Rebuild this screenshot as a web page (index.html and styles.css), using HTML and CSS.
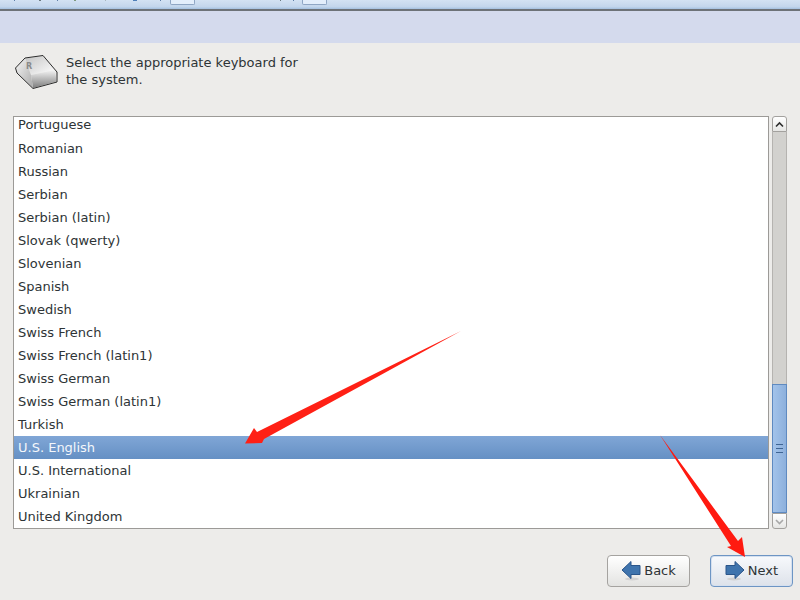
FILE: index.html
```html
<!DOCTYPE html>
<html lang="en">
<head>
    <meta charset="UTF-8">
    <meta name="viewport" content="width=device-width, initial-scale=1.0">
    <title>Keyboard selection</title>
    <link rel="stylesheet" href="styles.css">
</head>
<body>
    <div class="toolbar">
        <span class="tick tick-a"></span>
        <span class="tick tick-b"></span>
        <span class="tick tick-c"></span>
        <span class="tick tick-d"></span>
        <span class="tick tick-e"></span>
        <span class="tick tick-f"></span>
        <span class="tick tick-g"></span>
        <span class="tool-tab tab-first"></span>
        <span class="tick tick-h"></span>
        <span class="tick tick-i"></span>
        <span class="tool-tab tab-second"></span>
    </div>
    <div class="banner"></div>

    <div class="intro">
        <svg class="key-icon" width="46" height="36" viewBox="0 0 46 36">
            <defs>
                <linearGradient id="keyTop" x1="0" y1="0" x2="1" y2="1">
                    <stop offset="0" stop-color="#c4c4c4"/>
                    <stop offset="1" stop-color="#ffffff"/>
                </linearGradient>
                <linearGradient id="keyFront" x1="0" y1="0" x2="0" y2="1">
                    <stop offset="0" stop-color="#f4f4f4"/>
                    <stop offset="1" stop-color="#7d7d7d"/>
                </linearGradient>
                <linearGradient id="keySide" x1="0" y1="0" x2="1" y2="1">
                    <stop offset="0" stop-color="#f6f6f6"/>
                    <stop offset="1" stop-color="#a8a8a8"/>
                </linearGradient>
            </defs>
            <path d="M10 3.5 L28 1 L40 15 L16 20 Z" fill="url(#keyTop)"/>
            <path d="M16 20 L40 15 L41.5 26.5 L18 33 Z" fill="url(#keyFront)"/>
            <path d="M1 13 L10 3.5 L16 20 L18 33 L2 18 Z" fill="url(#keySide)"/>
            <path d="M0.5 13 L10 3 L28 0.5 L42 17 L42 27 L18 33.5 L2 18 Z" fill="none" stroke="#2b2b2b" stroke-width="1" stroke-linejoin="round"/>
            <text class="key-letter" x="11" y="14">R</text>
        </svg>
        <p class="intro-text">Select the appropriate keyboard for<br>the system.</p>
    </div>

    <div class="list-row">
        <ul class="layout-list">
            <li class="clipped">Portuguese</li>
            <li>Romanian</li>
            <li>Russian</li>
            <li>Serbian</li>
            <li>Serbian (latin)</li>
            <li>Slovak (qwerty)</li>
            <li>Slovenian</li>
            <li>Spanish</li>
            <li>Swedish</li>
            <li>Swiss French</li>
            <li>Swiss French (latin1)</li>
            <li>Swiss German</li>
            <li>Swiss German (latin1)</li>
            <li>Turkish</li>
            <li class="selected">U.S. English</li>
            <li>U.S. International</li>
            <li>Ukrainian</li>
            <li>United Kingdom</li>
        </ul>
        <div class="scrollbar">
            <div class="scroll-btn scroll-up">
                <svg width="13" height="13" viewBox="0 0 13 13"><path d="M3 8.5 L6.5 5 L10 8.5" fill="none" stroke="#2e2e2e" stroke-width="1.6"/></svg>
            </div>
            <div class="scroll-track">
                <div class="scroll-thumb"><span class="grip"></span></div>
            </div>
            <div class="scroll-btn scroll-down">
                <svg width="13" height="13" viewBox="0 0 13 13"><path d="M3 5 L6.5 8.5 L10 5" fill="none" stroke="#a8a8a8" stroke-width="1.6"/></svg>
            </div>
        </div>
    </div>

    <div class="buttons">
        <button class="btn">
            <svg width="20" height="20" viewBox="0 0 20 20"><ellipse cx="11" cy="18" rx="7" ry="1.5" fill="#d2d2d2"/><path d="M1 9 L10 0.5 L10 4.5 L19 4.5 L19 13.5 L10 13.5 L10 17.5 Z" fill="#3f74ad" stroke="#2a558a" stroke-width="1"/></svg>
            <span class="btn-label">Back</span>
        </button>
        <button class="btn btn-default">
            <svg width="20" height="20" viewBox="0 0 20 20"><ellipse cx="9" cy="18" rx="7" ry="1.5" fill="#d2d2d2"/><path d="M19 9 L10 0.5 L10 4.5 L1 4.5 L1 13.5 L10 13.5 L10 17.5 Z" fill="#3f74ad" stroke="#2a558a" stroke-width="1"/></svg>
            <span class="btn-label">Next</span>
        </button>
    </div>

    <!-- red arrows drawn over the screenshot -->
    <svg class="annotations" width="800" height="600" viewBox="0 0 800 600">
        <path d="M461 331 L257 432 L254 428 L245 443.5 L262 443 L264 439 Z" fill="#ff2015"/>
        <path d="M660 435 L738 541 L742 537 L745 557 L727 547 L731 546 Z" fill="#ff1a10"/>
    </svg>
</body>
</html>
```

FILE: styles.css
```css
html, body {
    height: 100%;
}
body {
    font-family: 'DejaVu Sans', sans-serif;
    font-size: 13px;
    margin: 0;
    background-color: #edecea;
    color: #2e3436;
    overflow: hidden;
    display: flex;
    flex-direction: column;
}
.toolbar {
    height: 9px;
    flex: none;
    display: flex;
    align-items: flex-start;
    background: linear-gradient(#d3e2f3, #c3d6ec 75%, #a3c0e0);
    border-bottom: 2px solid #6d7278;
}
.tick {
    width: 1px;
    height: 1px;
    background-color: #5f7fa8;
}
.tick-a { margin-left: 14px; }
.tick-b { margin-left: 24px; width: 2px; background-color: #6b7a80; }
.tick-c { margin-left: 16px; }
.tick-d { margin-left: 16px; width: 2px; background-color: #7d9a80; }
.tick-e { margin-left: 29px; background-color: #a8b8c0; }
.tick-f { margin-left: 27px; width: 4px; background-color: #4f7fb8; }
.tick-g { margin-left: 23px; }
.tick-h { margin-left: 85px; background-color: #6b7a80; }
.tick-i { margin-left: 12px; }
.tool-tab {
    width: 23px;
    height: 4px;
    background-color: #e3eefb;
    border: 1px solid #8fa6c4;
    border-top: none;
    border-radius: 0 0 2px 2px;
}
.tab-first {
    margin-left: 9px;
}
.tab-second {
    margin-left: 8px;
}
.banner {
    height: 32px;
    flex: none;
    background-color: #d4daed;
}
.intro {
    display: flex;
    gap: 5px;
    padding: 11px 0 0 15px;
    height: 73px;
    flex: none;
    box-sizing: border-box;
}
.key-icon {
    flex: none;
    margin-top: 1px;
}
.key-letter {
    font-family: 'DejaVu Sans', sans-serif;
    font-size: 8px;
    font-weight: bold;
    fill: #8a8a8a;
}
.intro-text {
    margin: 0;
    line-height: 17px;
}
.list-row {
    display: flex;
    gap: 3px;
    padding: 0 13px;
    height: 413px;
    flex: none;
}
.layout-list {
    flex: 1;
    list-style: none;
    margin: 0;
    padding: 0;
    background-color: #fff;
    border: 1px solid #9c9a97;
    overflow: hidden;
}
.layout-list li {
    height: 23px;
    line-height: 23px;
    padding-left: 4px;
}
.layout-list li.clipped {
    height: 20px;
    line-height: 16px;
}
.layout-list li.selected {
    color: #f4f7fb;
    background: linear-gradient(#80a6d6, #6590c4);
}
.scrollbar {
    width: 15px;
    display: flex;
    flex-direction: column;
}
.scroll-btn {
    height: 14px;
    flex: none;
    display: flex;
    align-items: center;
    justify-content: center;
    background: linear-gradient(#ffffff, #e6e6e4);
    border: 1px solid #a3a19e;
}
.scroll-up {
    border-radius: 3px 3px 0 0;
}
.scroll-down {
    border-radius: 0 0 3px 3px;
}
.scroll-track {
    flex: 1;
    display: flex;
    flex-direction: column;
    justify-content: flex-end;
    background-color: #d2d1ce;
    border-left: 1px solid #b5b3b0;
    border-right: 1px solid #b5b3b0;
}
.scroll-thumb {
    height: 129px;
    margin: 0 -1px;
    display: flex;
    align-items: center;
    justify-content: center;
    background: linear-gradient(90deg, #a3c3ea, #8db0dc);
    border: 1px solid #5f8ac0;
    box-sizing: border-box;
}
.grip {
    width: 7px;
    height: 7px;
    border-top: 1px solid #3f6594;
    border-bottom: 1px solid #3f6594;
    background: linear-gradient(#3f6594, #3f6594) center / 100% 1px no-repeat;
}
.buttons {
    display: flex;
    justify-content: flex-end;
    gap: 20px;
    padding: 26px 7px 0 0;
}
.btn {
    width: 83px;
    height: 32px;
    display: flex;
    align-items: center;
    justify-content: center;
    gap: 3px;
    padding: 0;
    font-family: 'DejaVu Sans', sans-serif;
    font-size: 13px;
    color: #2e3436;
    background: linear-gradient(#ffffff, #e3e3e1);
    border: 1px solid #a5a3a0;
    border-radius: 4px;
}
.btn-label {
    padding-bottom: 2px;
}
.btn-default {
    background: linear-gradient(#f7f9fc, #dde2ea);
    border-color: #6d95c4;
    box-shadow: inset 0 0 0 1px #d5e0ef;
}
.annotations {
    position: absolute;
    top: 0;
    left: 0;
    pointer-events: none;
}
```
